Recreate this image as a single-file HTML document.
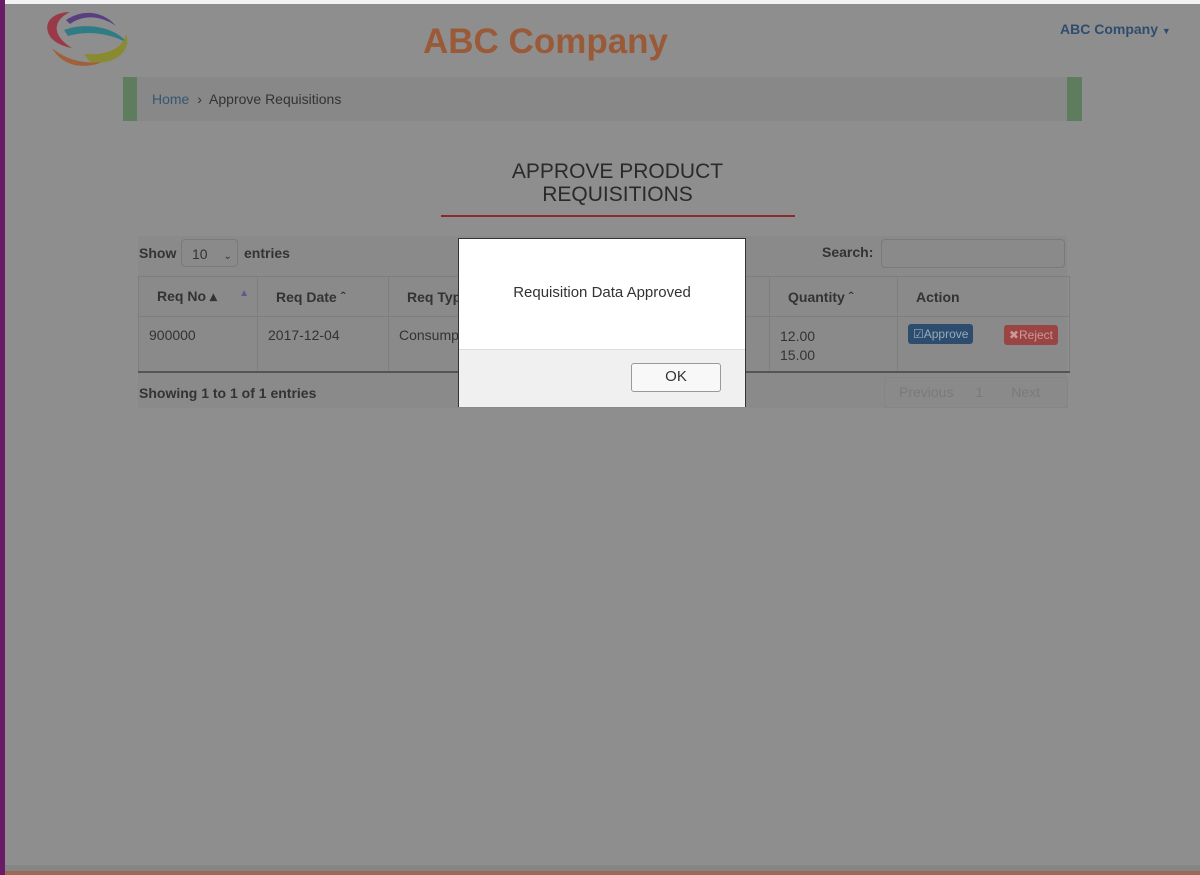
<!DOCTYPE html><html><head><style>
body{margin:0;width:1200px;height:875px;background:#8e8e8e;font-family:"Liberation Sans",sans-serif;position:relative;overflow:hidden;color:#333}
.a{position:absolute}
th,td{border:1px solid #7e7e7e;font-size:14px;text-align:left;padding:0;white-space:nowrap;overflow:hidden}
th{text-indent:18px}
td{text-indent:10px}
</style></head><body>
<div class="a" style="left:0;top:0;width:1200px;height:4px;background:#f2f2f2"></div>
<div class="a" style="left:0;top:0;width:5px;height:875px;background:#6b1b66"></div>
<div class="a" style="left:5px;top:865px;width:1195px;height:6px;background:#858585"></div>
<div class="a" style="left:5px;top:871px;width:1195px;height:4px;background:#9a6a58"></div>
<svg class="a" style="left:44px;top:8px" width="90" height="62" viewBox="0 0 90 62">
<path d="M22 12 C40 0 60 4 72 18 C58 8 40 6 26 16Z" fill="#5a3f80"/>
<path d="M20 22 C40 14 72 18 84 36 C70 26 44 22 24 28Z" fill="#2f7c85"/>
<path d="M4 24 C0 12 12 4 26 4 C10 12 6 26 28 40 C16 38 6 32 4 24Z" fill="#9a3a48"/>
<path d="M40 46 C62 48 80 40 82 26 C88 42 72 58 46 54Z" fill="#8a8a30"/>
<path d="M8 40 C22 52 40 56 58 54 C40 62 18 58 8 40Z" fill="#a0603a"/>
</svg>
<div class="a" style="left:423px;top:22px;font-size:35px;font-weight:bold;color:#9a5a38">ABC Company</div>
<div class="a" style="left:1060px;top:21px;font-size:14px;font-weight:bold;color:#2e4d6e">ABC Company <span style="font-size:9px">▼</span></div>
<div class="a" style="left:123px;top:77px;width:959px;height:44px;background:#888"></div>
<div class="a" style="left:123px;top:77px;width:14px;height:44px;background:#5e7d5e"></div>
<div class="a" style="left:1067px;top:77px;width:15px;height:44px;background:#5e7d5e"></div>
<div class="a" style="left:152px;top:91px;font-size:14px"><span style="color:#365670">Home</span> <span style="margin:0 4px">›</span> Approve Requisitions</div>
<div class="a" style="left:440px;top:160px;width:355px;text-align:center;font-size:21px;line-height:23px;color:#2a2a2a">APPROVE PRODUCT<br>REQUISITIONS</div>
<div class="a" style="left:441px;top:215px;width:354px;height:2px;background:#8a2a2a"></div>
<div class="a" style="left:138px;top:236px;width:929px;height:172px;background:#8a8a8a"></div>
<div class="a" style="left:139px;top:245px;font-size:14px;font-weight:bold">Show</div>
<div class="a" style="left:181px;top:239px;width:57px;height:28px;border:1px solid #7a7a7a;border-radius:4px;font-size:14px;line-height:28px;box-sizing:border-box;padding-left:10px">10 <span style="margin-left:12px;font-size:10px">⌄</span></div>
<div class="a" style="left:244px;top:245px;font-size:14px;font-weight:bold">entries</div>
<div class="a" style="left:822px;top:244px;font-size:14px;font-weight:bold">Search:</div>
<div class="a" style="left:881px;top:239px;width:184px;height:29px;border:1px solid #7a7a7a;border-radius:4px;box-sizing:border-box"></div>
<table class="a" style="left:138px;top:276px;width:931px;border-collapse:collapse;table-layout:fixed">
<colgroup><col style="width:119px"><col style="width:131px"><col style="width:172px"><col style="width:209px"><col style="width:128px"><col style="width:172px"></colgroup>
<tr style="height:40px;font-weight:bold"><th>Req No ▴ <span style="float:right;color:#5a5a90;font-size:10px;margin-right:8px;text-indent:0">▲</span></th><th>Req Date ˆ</th><th>Req Type</th><th></th><th>Quantity ˆ</th><th>Action</th></tr>
<tr style="height:55px;vertical-align:top;border-bottom:2px solid #555"><td style="padding-top:10px">900000</td><td style="padding-top:10px">2017-12-04</td><td style="padding-top:10px">Consumption</td><td></td><td style="padding-top:10px;line-height:19px;text-indent:0;padding-left:10px">12.00<br>15.00</td><td style="padding-top:8px;text-indent:0;padding-left:10px;padding-right:11px"><span style="background:#2d4d6e;color:#9ab;font-size:12px;padding:3px 5px;border-radius:3px">☑Approve</span><span style="float:right;background:#9a4444;color:#c99;font-size:12px;padding:3px 5px;border-radius:3px">✖Reject</span></td></tr>
</table>
<div class="a" style="left:139px;top:385px;font-size:14px;font-weight:bold">Showing 1 to 1 of 1 entries</div>
<div class="a" style="left:884px;top:377px;width:182px;height:29px;border:1px solid #858585;font-size:14px;color:#7a7a7a;line-height:29px"><span style="margin-left:14px">Previous</span><span style="margin-left:22px">1</span><span style="margin-left:28px">Next</span></div>
<div class="a" style="left:458px;top:238px;width:288px;height:169px;background:#fff;border:1px solid #333;box-sizing:border-box">
<div style="height:110px;text-align:center;line-height:108px;font-size:15px">Requisition Data Approved</div>
<div style="height:57px;background:#f0f0f0;border-top:1px solid #ddd;position:relative"><div style="position:absolute;left:172px;top:13px;width:88px;height:27px;border:1px solid #999;border-radius:3px;background:#f8f8f8;text-align:center;line-height:26px;font-size:15px">OK</div></div>
</div>
</body></html>
